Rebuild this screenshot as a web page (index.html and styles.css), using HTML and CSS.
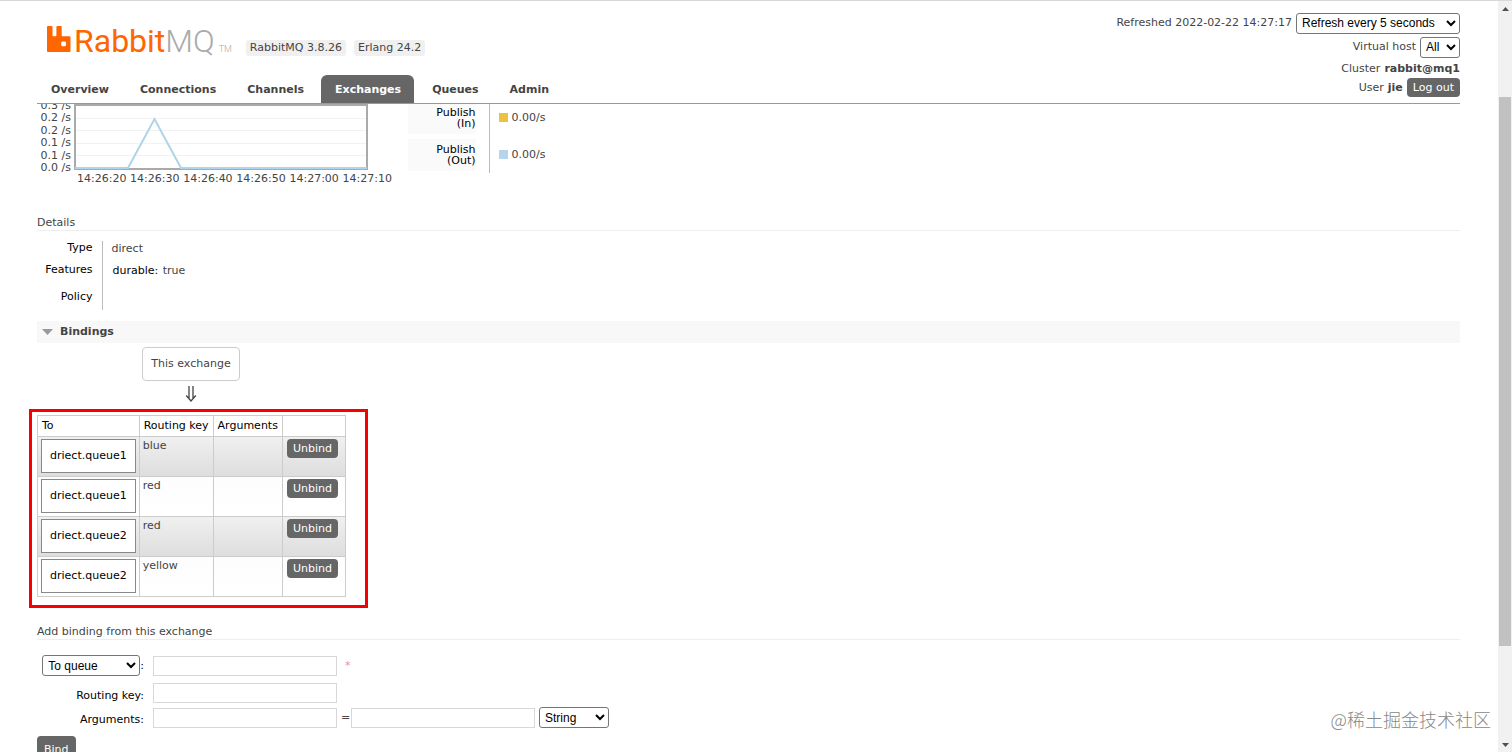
FILE: index.html
```html
<!DOCTYPE html>
<html lang="en">
<head>
    <meta charset="UTF-8">
    <meta name="viewport" content="width=device-width, initial-scale=1.0">
    <title>RabbitMQ Management</title>
    <link rel="stylesheet" href="styles.css">
</head>
<body>
    <div class="page">
        <header class="header">
            <div class="header-left">
                <div class="brand">
                    <a class="logo" href="#">
                        <svg class="logo-mark" width="24" height="26" viewBox="0 0 24 26">
                            <path fill="#ff6600" fill-rule="evenodd" d="M1 0h3.500q1 0 1 1v8.500q0 .8.800.800h2.200q.900 0 .900-.800V1q0-1 1-1h3.300q1 0 1 1v8.500q0 .8.800.800h7q1 0 1 1V25q0 1-1 1H1q-1 0-1-1V1q0-1 1-1zM15.500 15.500q-1.300 0-1.300 1.300v2.200q0 1.300 1.300 1.300h2.200q1.300 0 1.300-1.300v-2.200q0-1.300-1.300-1.300z"/>
                        </svg>
                        <span class="logo-rabbit">Rabbit</span><span class="logo-mq">MQ</span><span class="logo-tm">TM</span>
                    </a>
                    <span class="version">RabbitMQ 3.8.26</span>
                    <span class="version">Erlang 24.2</span>
                </div>
                <nav class="tabs">
                    <a href="#">Overview</a>
                    <a href="#">Connections</a>
                    <a href="#">Channels</a>
                    <a href="#" class="selected">Exchanges</a>
                    <a href="#">Queues</a>
                    <a href="#">Admin</a>
                </nav>
            </div>
            <div class="login">
                <div class="login-row row-select">
                    <label for="update-every">Refreshed 2022-02-22 14:27:17</label>
                    <select id="update-every" class="select select-refresh"><option>Refresh every 5 seconds</option></select>
                </div>
                <div class="login-row row-select">
                    <label for="show-vhost">Virtual host</label>
                    <select id="show-vhost" class="select select-vhost"><option>All</option></select>
                </div>
                <div class="login-row">Cluster <b>rabbit@mq1</b></div>
                <div class="login-row">User <b>jie</b> <button class="button">Log out</button></div>
            </div>
        </header>

        <main class="main">
            <div class="rates">
                <div class="chart">
                    <div class="chart-y">
                        <span>0.3 /s</span><span>0.2 /s</span><span>0.2 /s</span><span>0.1 /s</span><span>0.1 /s</span><span>0.0 /s</span>
                    </div>
                    <div class="chart-body">
                        <svg class="plot" width="294" height="66" viewBox="0 0 294 66">
                            <path stroke="#f2f2f2" d="M1 14.500h292M1 26.500h292M1 39.500h292M1 51.500h292"/>
                            <rect x="1" y="1" width="292" height="64" fill="none" stroke="#aaaaaa" stroke-width="2"/>
                            <path fill="none" stroke="#afd3e8" stroke-width="2" d="M1 64H54L80.500 15L107 64H293"/>
                        </svg>
                        <div class="chart-x">
                            <span>14:26:20</span><span>14:26:30</span><span>14:26:40</span><span>14:26:50</span><span>14:27:00</span><span>14:27:10</span>
                        </div>
                    </div>
                </div>
                <table class="legend">
                    <tr><th><span>Publish<br>(In)</span></th><td><i class="swatch swatch-in"></i>0.00/s</td></tr>
                    <tr><th><span>Publish<br>(Out)</span></th><td><i class="swatch swatch-out"></i>0.00/s</td></tr>
                </table>
            </div>

            <h3>Details</h3>
            <table class="facts">
                <tr><th>Type</th><td>direct</td></tr>
                <tr><th>Features</th><td><span class="feature">durable:</span> true</td></tr>
                <tr class="policy"><th>Policy</th><td></td></tr>
            </table>

            <h2 class="section-title">
                <svg width="11" height="6" viewBox="0 0 11 6"><path fill="#999999" d="M0 0h11L5.500 6z"/></svg>
                Bindings
            </h2>

            <div class="bindings">
                <div class="source">
                    <span class="exchange">This exchange</span>
                    <svg class="arrow" width="12" height="17" viewBox="0 0 12 17">
                        <path fill="none" stroke="#444444" stroke-width="1.300" d="M4 1v12M8 1v12M1.200 10.500L6 16l4.800-5.500"/>
                    </svg>
                </div>
                <div class="highlight">
                    <table class="list">
                        <thead>
                            <tr><th>To</th><th>Routing key</th><th>Arguments</th><th></th></tr>
                        </thead>
                        <tbody>
                            <tr><td><a class="queue" href="#">driect.queue1</a></td><td>blue</td><td></td><td><button class="button">Unbind</button></td></tr>
                            <tr><td><a class="queue" href="#">driect.queue1</a></td><td>red</td><td></td><td><button class="button">Unbind</button></td></tr>
                            <tr><td><a class="queue" href="#">driect.queue2</a></td><td>red</td><td></td><td><button class="button">Unbind</button></td></tr>
                            <tr><td><a class="queue" href="#">driect.queue2</a></td><td>yellow</td><td></td><td><button class="button">Unbind</button></td></tr>
                        </tbody>
                    </table>
                </div>
            </div>

            <h3>Add binding from this exchange</h3>
            <form class="form">
                <div class="form-row form-target">
                    <div class="form-label">
                        <select class="select select-target" aria-label="Destination type"><option>To queue</option></select><label for="destination">:</label>
                    </div>
                    <input type="text" id="destination">
                    <span class="mand">*</span>
                </div>
                <div class="form-row">
                    <label class="form-label" for="routing-key">Routing key:</label>
                    <input type="text" id="routing-key">
                </div>
                <div class="form-row">
                    <label class="form-label" for="arg-key">Arguments:</label>
                    <input type="text" id="arg-key">
                    <span class="equals">=</span>
                    <input type="text" aria-label="Argument value">
                    <select class="select select-type" aria-label="Argument type"><option>String</option></select>
                </div>
                <button type="button" class="button button-bind">Bind</button>
            </form>
        </main>
    </div>

    <div class="scrollbar">
        <svg width="7" height="4" viewBox="0 0 7 4"><path fill="#505050" d="M0 4h7L3.500 0z"/></svg>
        <div class="track"><div class="thumb"></div></div>
        <svg width="7" height="4" viewBox="0 0 7 4"><path fill="#505050" d="M0 0h7L3.500 4z"/></svg>
    </div>
    <div class="watermark">@稀土掘金技术社区</div>
</body>
</html>
```
FILE: styles.css
```css
* {
    box-sizing: border-box;
}
body {
    display: flex;
    height: 100vh;
    margin: 0;
    overflow: hidden;
    border-top: 1px solid #d8d8d8;
    background: #ffffff;
    color: #444444;
    font: 11px/14px Verdana, "DejaVu Sans", sans-serif;
}
a {
    color: inherit;
    text-decoration: none;
}
h2, h3 {
    margin: 0;
    font-size: 11px;
}
table {
    border-collapse: collapse;
}
th, td {
    padding: 0;
    font-weight: normal;
}
.page {
    display: flex;
    flex-direction: column;
    flex: 1;
    min-width: 0;
    padding-right: 38px;
}

/* header */
.header {
    display: flex;
    flex-shrink: 0;
    justify-content: space-between;
    margin-left: 37px;
    border-bottom: 1px solid #999999;
}
.brand {
    display: flex;
    align-items: flex-end;
    gap: 8px;
    height: 74px;
    padding: 0 0 19px 10px;
}
.logo {
    display: flex;
    align-items: baseline;
    margin-right: 6px;
    font: 300 32px/30px Roboto, sans-serif;
}
.logo-mark {
    margin-right: 3px;
}
.logo-rabbit {
    color: #ff6600;
    font-weight: 400;
}
.logo-mq {
    color: #aaaaaa;
}
.logo-tm {
    margin-left: 4px;
    color: #aaaaaa;
    font-size: 9px;
    line-height: 9px;
}
.version {
    padding: 0 4px;
    border-radius: 3px;
    background: #f0f0f0;
    line-height: 16px;
}
.login {
    display: flex;
    flex-direction: column;
    align-items: flex-end;
    padding-top: 10px;
}
.login-row {
    display: flex;
    align-items: center;
    gap: 4px;
    height: 19px;
}
.row-select {
    height: 24px;
}
.select {
    height: 21px;
    padding: 0 1px;
    border: 1px solid #767676;
    border-radius: 3px;
    background: #ffffff;
    color: #000000;
    font: 12px "Liberation Sans", Arial, sans-serif;
}
.select-refresh {
    width: 164px;
}
.select-vhost {
    width: 40px;
}
.select-target {
    width: 98px;
}
.select-type {
    width: 70px;
}
.button {
    height: 19px;
    padding: 0 6px;
    border: 0;
    border-radius: 4px;
    background: #666666;
    color: #ffffff;
    font: 11px/19px Verdana, "DejaVu Sans", sans-serif;
}
.tabs {
    display: flex;
    gap: 4px;
}
.tabs a {
    padding: 1px 13px 0 14px;
    border-radius: 6px 6px 0 0;
    font-weight: bold;
    line-height: 27px;
}
.tabs .selected {
    background: #666666;
    color: #ffffff;
}

/* content, scrolled under the header */
.main {
    flex: 1;
    min-height: 0;
    padding-left: 37px;
    overflow: hidden;
}
.rates {
    display: flex;
    height: 111px;
}
.chart {
    display: flex;
    width: 371px;
}
.chart-y {
    display: flex;
    flex-direction: column;
    justify-content: space-between;
    width: 37px;
    height: 74px;
    margin-top: -4px;
    padding-right: 3px;
    line-height: 12px;
    text-align: right;
    white-space: nowrap;
}
.plot {
    display: block;
}
.chart-x {
    display: flex;
    justify-content: space-between;
    width: 318px;
    margin-top: 2px;
    padding-left: 3px;
}
.legend {
    height: 74px;
    margin-top: -5px;
}
.legend th {
    width: 81px;
    padding-right: 13px;
    border-right: 1px solid #bbbbbb;
    color: #000000;
    line-height: 11px;
    text-align: right;
}
.legend th span {
    display: block;
    padding: 5px 0;
    background: #fafafa;
}
.legend td {
    padding-left: 9px;
}
.swatch {
    display: inline-block;
    width: 9px;
    height: 9px;
    margin-right: 4px;
    vertical-align: -1px;
}
.swatch-in {
    background: #edc240;
}
.swatch-out {
    background: #b4d5ec;
}
h3 {
    border-bottom: 1px solid #eeeeee;
    font-weight: normal;
    line-height: 15px;
}
.facts {
    margin: 10px 0 11px;
}
.facts th {
    width: 65px;
    height: 22px;
    padding: 0 9px 8px 0;
    border-right: 1px solid #bbbbbb;
    color: #000000;
    text-align: right;
}
.facts td {
    padding: 0 0 7px 9px;
}
.facts .policy th {
    padding: 5px 9px 6px 0;
}
.feature {
    padding: 0 1px;
    color: #000000;
}
.section-title {
    display: flex;
    align-items: center;
    gap: 7px;
    padding-left: 5px;
    background: #f8f8f8;
    line-height: 22px;
}

/* bindings */
.bindings {
    padding: 4px 0 16px;
}
.source {
    display: flex;
    flex-direction: column;
    align-items: center;
    gap: 4px;
    width: 308px;
}
.exchange {
    padding: 9px 8px;
    border: 1px solid #cccccc;
    border-radius: 4px;
}
.highlight {
    width: 339px;
    margin: 7px 0 0 -8px;
    padding: 3px 0 8px 5px;
    border: 3px solid #f90000;
}
.list th, .list td {
    padding: 2px 3px 3px;
    border: 1px solid #cccccc;
    text-align: left;
    vertical-align: top;
}
.list th {
    padding: 3px 4px;
    color: #000000;
}
.list td:last-child {
    padding: 2px 7px 3px 4px;
}
.list tbody tr {
    background: linear-gradient(#fdfdfd, #ffffff);
}
.list tbody tr:nth-child(odd) {
    background: linear-gradient(#f0f0f0, #dddddd);
}
.queue {
    display: block;
    padding: 9px 8px;
    border: 1px solid #888888;
    background: #ffffff;
    color: #000000;
}

/* add binding */
.form {
    padding-top: 15px;
}
.form-row {
    display: flex;
    align-items: center;
    gap: 4px;
    margin-bottom: 4px;
}
.form-target {
    margin-bottom: 7px;
}
.form-label {
    display: flex;
    align-items: center;
    justify-content: flex-end;
    width: 107px;
    margin-right: 5px;
    color: #000000;
}
label.form-label {
    padding-top: 5px;
}
.form input {
    width: 184px;
    height: 20px;
    padding: 2px;
    border: 1px solid #d8d8d8;
}
.mand {
    margin-left: 4px;
    color: #ff8888;
}
.equals {
    width: 6px;
}
.button-bind {
    height: 27px;
    margin-top: 4px;
    padding: 0 7px;
}

/* window scrollbar */
.scrollbar {
    display: flex;
    flex-direction: column;
    align-items: center;
    width: 14px;
    padding: 6px 0 5px;
    background: #f1f1f1;
}
.track {
    flex: 1;
    width: 12px;
    padding-top: 86px;
}
.thumb {
    height: 85%;
    background: #c1c1c1;
}
.watermark {
    position: absolute;
    right: 21px;
    bottom: 21px;
    color: #888888;
    font: 300 18px/24px "Noto Sans CJK SC", sans-serif;
}
```
